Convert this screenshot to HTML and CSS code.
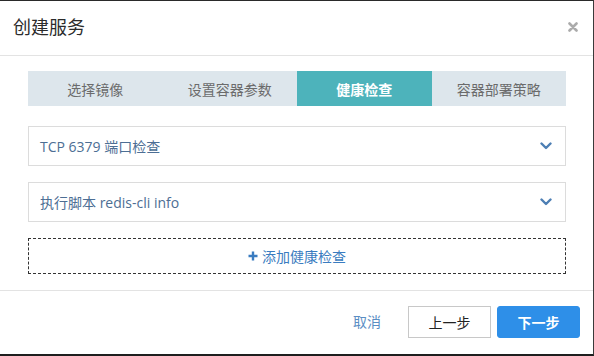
FILE: index.html
```html
<!DOCTYPE html>
<html lang="zh-CN">
<head>
<meta charset="utf-8">
<title>创建服务</title>
<link rel="stylesheet" href="styles.css">
</head>
<body>
<div class="dialog">
  <div class="header">
    <h1 class="title">创建服务</h1>
    <span class="close" aria-label="关闭">
      <svg width="10" height="10" viewBox="0 0 10 10"><path d="M1.5 1.5 L8.5 8.5 M8.5 1.5 L1.5 8.5" stroke="#ababab" stroke-width="2.6" stroke-linecap="round"/></svg>
    </span>
  </div>
  <div class="body">
    <div class="tabs">
      <div class="tab">选择镜像</div>
      <div class="tab">设置容器参数</div>
      <div class="tab active">健康检查</div>
      <div class="tab">容器部署策略</div>
    </div>
    <div class="row">
      <span class="row-text">TCP 6379 端口检查</span>
      <svg class="chev" width="12" height="8" viewBox="0 0 12 8"><path d="M1.5 1.5 L6 6 L10.5 1.5" fill="none" stroke="#4d7fb4" stroke-width="2.4" stroke-linecap="round" stroke-linejoin="round"/></svg>
    </div>
    <div class="row">
      <span class="row-text">执行脚本 redis-cli info</span>
      <svg class="chev" width="12" height="8" viewBox="0 0 12 8"><path d="M1.5 1.5 L6 6 L10.5 1.5" fill="none" stroke="#4d7fb4" stroke-width="2.4" stroke-linecap="round" stroke-linejoin="round"/></svg>
    </div>
    <div class="add">
      <svg class="plus" width="10" height="10" viewBox="0 0 10 10"><path d="M5 0.5 V9.5 M0.5 5 H9.5" stroke="#3a7cc0" stroke-width="2.4"/></svg>
      <span>添加健康检查</span>
    </div>
  </div>
  <div class="footer">
    <span class="cancel">取消</span>
    <button class="btn btn-default">上一步</button>
    <button class="btn btn-primary">下一步</button>
  </div>
</div>
</body>
</html>
```

FILE: styles.css
```css
html, body {
  margin: 0;
  padding: 0;
  background: #ffffff;
}
body {
  font-family: "Liberation Sans", "Noto Sans CJK SC", sans-serif;
}
.dialog {
  width: 594px;
  height: 356px;
  box-sizing: border-box;
  border-top: 1px solid #2a2a2a;
  border-right: 1px solid #3a3a3a;
  border-bottom: 2px solid #1e1e1e;
  display: flex;
  flex-direction: column;
  background: #fff;
}
.header {
  height: 55px;
  box-sizing: border-box;
  border-bottom: 1px solid #e3e3e3;
  display: flex;
  align-items: center;
  justify-content: space-between;
  padding: 0 15px 0 13px;
}
.title {
  margin: 0;
  font-size: 18px;
  font-weight: 400;
  color: #2b2b2b;
  line-height: 24px;
  padding-bottom: 1px;
}
.close {
  display: flex;
  width: 10px;
  height: 10px;
  margin-bottom: 3px;
}
.body {
  padding: 15px 27px 16px 28px;
  display: flex;
  flex-direction: column;
}
.tabs {
  display: grid;
  grid-template-columns: repeat(4, 1fr);
  height: 35px;
  background: #dde6ec;
  margin-bottom: 20px;
}
.tab {
  display: flex;
  align-items: center;
  justify-content: center;
  font-size: 14px;
  color: #6b6b6b;
}
.tab.active {
  background: #4db3bb;
  color: #ffffff;
  font-weight: 700;
}
.row {
  height: 40px;
  box-sizing: border-box;
  border: 1px solid #dcdcdc;
  display: flex;
  align-items: center;
  justify-content: space-between;
  padding: 0 13px 0 11px;
  margin-bottom: 16px;
}
.row-text {
  font-family: "Open Sans", "Noto Sans CJK SC", sans-serif;
  font-size: 14px;
  color: #4c6e94;
}
.chev {
  display: block;
}
.add {
  height: 36px;
  box-sizing: border-box;
  border: 1px dashed #333;
  display: flex;
  align-items: center;
  justify-content: center;
  gap: 4px;
  font-size: 14px;
  color: #3a7cc0;
}
.plus {
  display: block;
}
.footer {
  flex: 1;
  border-top: 1px solid #e3e3e3;
  display: flex;
  align-items: flex-start;
  justify-content: flex-end;
  padding: 15px 13px 0 0;
}
.cancel {
  font-size: 14px;
  color: #5a8ec4;
  margin-right: 27px;
  line-height: 32px;
}
.btn {
  width: 83px;
  height: 32px;
  box-sizing: border-box;
  font-family: inherit;
  font-size: 14px;
  padding: 0;
  cursor: pointer;
}
.btn-default {
  background: #fff;
  border: 1px solid #c8c8c8;
  color: #222;
  margin-right: 6px;
}
.btn-primary {
  background: #2e8fe8;
  border: 1px solid #2e8fe8;
  border-radius: 3px;
  color: #fff;
  font-weight: 700;
}
```
